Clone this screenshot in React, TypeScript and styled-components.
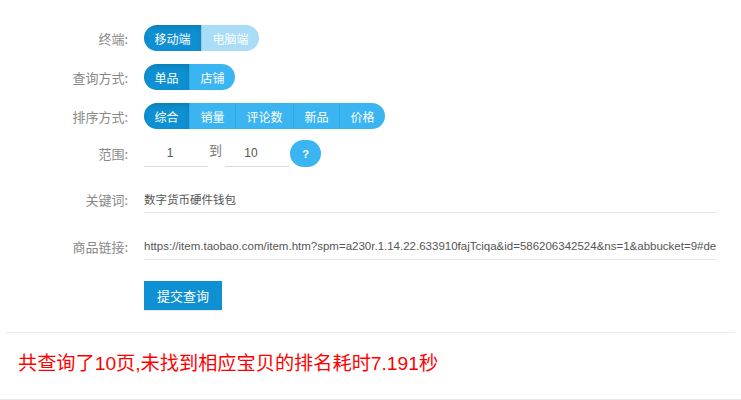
import React from 'react';
import styled, { createGlobalStyle, css } from 'styled-components';

const Global = createGlobalStyle`
  html, body { margin: 0; padding: 0; background: #fff; }
  body { font-family: "Liberation Sans", "Noto Sans CJK SC", sans-serif; }
  * { box-sizing: border-box; }
`;

const Page = styled.div`
  width: 741px;
  height: 400px;
  padding: 0 6px;
  overflow: hidden;
  border-bottom: 1px solid #e8e8ec;
`;

const Form = styled.form`
  display: flex;
  flex-direction: column;
  padding-top: 25px;
`;

const Row = styled.div<{ $mt?: number; $h?: number }>`
  display: flex;
  align-items: center;
  height: ${(p) => p.$h ?? 26}px;
  margin-top: ${(p) => p.$mt ?? 0}px;
`;

const Label = styled.label`
  flex: 0 0 122px;
  margin-right: 16px;
  text-align: right;
  font-size: 13px;
  color: #888;
  font-family: "Noto Sans CJK SC", sans-serif;
`;

const Group = styled.div`
  display: flex;
  height: 26px;
  border-radius: 13px;
  overflow: hidden;
`;

type Kind = 'active' | 'normal' | 'disabled';

const SegBtn = styled.button<{ $kind: Kind }>`
  border: 0;
  margin: 0;
  height: 26px;
  padding: 0 10.5px;
  font-size: 12px;
  font-family: "Noto Sans CJK SC", sans-serif;
  color: #fff;
  cursor: pointer;
  background: #3bb4f2;
  & + & { border-left: 1px solid rgba(0, 80, 140, 0.12); }
  ${(p) =>
    p.$kind === 'active' &&
    css`
      background: #0e90d2;
      box-shadow: inset 0 3px 5px rgba(0, 0, 0, 0.12);
    `}
  ${(p) =>
    p.$kind === 'disabled' &&
    css`
      background: #a9dcf7;
    `}
`;

const RangeInput = styled.input`
  width: 64px;
  height: 26px;
  border: 0;
  border-bottom: 1px solid #d5d9e3;
  padding: 0 12px 0 0;
  text-align: center;
  font-size: 12px;
  color: #555;
  font-family: "Liberation Sans", sans-serif;
  outline: none;
  background: transparent;
`;

const To = styled.span`
  width: 17px;
  font-size: 13px;
  color: #777;
  font-family: "Noto Sans CJK SC", sans-serif;
  align-self: flex-start;
  line-height: 20px;
  padding-left: 1px;
`;

const Help = styled.button`
  width: 31px;
  height: 27px;
  margin-left: 1px;
  border: 0;
  border-radius: 14px;
  background: #3bb4f2;
  color: #fff;
  font-weight: bold;
  font-size: 11px;
  font-family: "Liberation Sans", sans-serif;
  padding: 0;
`;

const TextInput = styled.input`
  width: 572px;
  height: 27px;
  border: 0;
  border-bottom: 1px solid #e2e5ea;
  padding: 0;
  font-size: 11.5px;
  color: #555;
  font-family: "Liberation Sans", "Noto Sans CJK SC", sans-serif;
  outline: none;
  background: transparent;
`;

const Submit = styled.button`
  height: 29px;
  padding: 0 13px;
  border: 0;
  border-radius: 0;
  background: #0e90d2;
  color: #fff;
  font-size: 13px;
  font-family: "Noto Sans CJK SC", sans-serif;
  box-shadow: 0 1px 1px rgba(0, 0, 0, 0.08);
`;

const Divider = styled.hr`
  margin: 22px 0 0;
  border: 0;
  border-top: 1px solid #eaeaea;
`;

const Result = styled.p`
  margin: 0;
  padding: 17px 0 0 12px;
  font-size: 19.2px;
  line-height: 28px;
  color: #ff0000;
  font-family: "Segoe UI", "Liberation Sans", "Noto Sans CJK SC", sans-serif;
`;

const Segments: React.FC<{ items: string[]; active: number; disabled?: number[] }> = ({
  items,
  active,
  disabled = [],
}) => (
  <Group>
    {items.map((t, i) => (
      <SegBtn
        type="button"
        key={t}
        $kind={i === active ? 'active' : disabled.includes(i) ? 'disabled' : 'normal'}
      >
        {t}
      </SegBtn>
    ))}
  </Group>
);

export default function App() {
  return (
    <Page>
      <Global />
      <Form onSubmit={(e) => e.preventDefault()}>
        <Row>
          <Label>终端:</Label>
          <Segments items={['移动端', '电脑端']} active={0} disabled={[1]} />
        </Row>
        <Row $mt={13}>
          <Label>查询方式:</Label>
          <Segments items={['单品', '店铺']} active={0} />
        </Row>
        <Row $mt={13}>
          <Label>排序方式:</Label>
          <Segments items={['综合', '销量', '评论数', '新品', '价格']} active={0} />
        </Row>
        <Row $mt={11} $h={27}>
          <Label>范围:</Label>
          <RangeInput defaultValue="1" />
          <To>到</To>
          <RangeInput defaultValue="10" />
          <Help type="button">?</Help>
        </Row>
        <Row $mt={19} $h={27}>
          <Label>关键词:</Label>
          <TextInput defaultValue="数字货币硬件钱包" />
        </Row>
        <Row $mt={20} $h={27}>
          <Label>商品链接:</Label>
          <TextInput defaultValue="https://item.taobao.com/item.htm?spm=a230r.1.14.22.633910fajTciqa&id=586206342524&ns=1&abbucket=9#detail" />
        </Row>
        <Row $mt={21} $h={29}>
          <Label />
          <Submit type="submit">提交查询</Submit>
        </Row>
      </Form>
      <Divider />
      <Result>共查询了10页,未找到相应宝贝的排名耗时7.191秒</Result>
    </Page>
  );
}
